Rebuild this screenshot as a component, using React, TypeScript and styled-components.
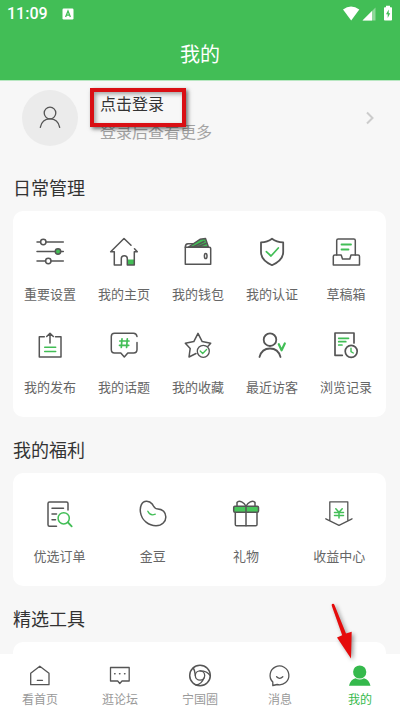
import React from "react";
import styled, { createGlobalStyle } from "styled-components";

const GREEN = "#42be56";
const INK = "#555555";

const GlobalStyle = createGlobalStyle`
  * { box-sizing: border-box; }
  body {
    margin: 0;
    background: #f7f7f7;
    font-family: "Noto Sans CJK SC", "Noto Sans", sans-serif;
  }
  button {
    border: 0;
    padding: 0;
    background: none;
    font: inherit;
    color: inherit;
    cursor: pointer;
  }
  h1, h2, p { margin: 0; font-weight: 400; }
`;

const Screen = styled.div`
  display: flex;
  flex-direction: column;
  height: 100vh;
  overflow: hidden;
`;

const Header = styled.header`
  flex: none;
  color: #ffffff;
  background: ${GREEN};
  border-bottom: 1px solid #b8e7c1;
`;

const StatusBar = styled.div`
  display: flex;
  align-items: center;
  height: 28px;
  padding: 0 8px 0 7px;
`;

const Clock = styled.time`
  font: 500 16px/28px Roboto, sans-serif;
  margin-right: 14px;
`;

const StatusIcons = styled.div`
  display: flex;
  align-items: center;
  margin-left: auto;
`;

const PageTitle = styled.h1`
  font-size: 20px;
  line-height: 52px;
  text-align: center;
`;

const Content = styled.main`
  flex: 1;
  min-height: 0;
  overflow: hidden;
`;

const Profile = styled.button`
  display: flex;
  align-items: flex-start;
  width: 100%;
  height: 94px;
  padding: 9px 24px 0 22px;
  text-align: left;
`;

const Avatar = styled.span`
  display: grid;
  place-items: center;
  width: 56px;
  height: 56px;
  border-radius: 50%;
  background: #ebebeb;
`;

const ProfileText = styled.span`
  position: relative;
  display: grid;
  flex: 1;
  row-gap: 2px;
  margin-left: 22px;
  font-size: 16px;
  line-height: 26px;
`;

const LoginText = styled.span`
  color: #333333;
`;

const HintText = styled.span`
  color: #a3a3a3;
`;

const Highlight = styled.span`
  position: absolute;
  top: -2px;
  left: -10px;
  width: 96px;
  height: 39px;
  border: 4px solid #d90f14;
  box-shadow: 2px 2px 4px rgba(0, 0, 0, 0.55), inset 2px 2px 4px rgba(0, 0, 0, 0.35);
`;

const Chevron = styled.span`
  display: flex;
  align-self: flex-start;
  padding-top: 20px;
`;

const Section = styled.section`
  margin: 0 14px 20px 13px;
`;

const SectionTitle = styled.h2`
  margin-bottom: 12px;
  font-size: 18px;
  line-height: 24px;
  color: #333333;
`;

const Card = styled.div<{ $columns: number }>`
  display: grid;
  grid-template-columns: repeat(${(p) => p.$columns}, 1fr);
  row-gap: 21px;
  min-height: 113px;
  padding: 25px ${(p) => (p.$columns === 5 ? 3 : 0)}px 16px 0;
  border-radius: 10px;
  background: #ffffff;
`;

const Entry = styled.button`
  display: flex;
  flex-direction: column;
  align-items: center;
  gap: 14px;
  height: 72px;
  font-size: 13px;
  line-height: 24px;
  color: #666666;
`;

const TabBar = styled.nav`
  position: relative;
  display: grid;
  flex: none;
  grid-template-columns: repeat(5, 1fr);
  height: 58px;
  padding-top: 10px;
  background: #ffffff;
`;

const Tab = styled.a<{ $active?: boolean }>`
  position: relative;
  display: flex;
  flex-direction: column;
  align-items: center;
  font-size: 12px;
  line-height: 22px;
  text-decoration: none;
  color: ${(p) => (p.$active ? "#35b94c" : "#999999")};
`;

const Pointer = styled.svg`
  position: absolute;
  right: 41px;
  bottom: 51px;
  filter: drop-shadow(2px 2px 2px rgba(0, 0, 0, 0.4));
`;

function Icon({ size = 32, children }: { size?: number; children: React.ReactNode }) {
  return (
    <svg
      width={size}
      height={size}
      viewBox={`0 0 ${size} ${size}`}
      fill="none"
      stroke={INK}
      strokeWidth={size === 32 ? 1.5 : 1.3}
      strokeLinejoin="round"
      strokeLinecap="round"
      aria-hidden="true"
    >
      {children}
    </svg>
  );
}

const daily = [
  {
    label: "重要设置",
    art: (
      <>
        <path d="M3 6H6.5M12 6H29.3M3 15.5H21.3M26.7 15.5H29.3M3 25H11.5M17 25H29.3" />
        <circle cx="9.3" cy="6" r="2.7" />
        <circle cx="24" cy="15.5" r="2.7" fill={GREEN} />
        <circle cx="14.3" cy="25" r="2.7" />
      </>
    ),
  },
  {
    label: "我的主页",
    art: (
      <>
        <path d="M19.3 23.5H26.3V29H19.3z" fill={GREEN} stroke="none" />
        <path d="M23 9.3 16 2.5 2.7 15.7H6.3V29H13.3V22.5Q13.3 19.7 16.3 19.7T19.3 22.5V29H26.3V15.7H29.3L26.5 12.8" />
      </>
    ),
  },
  {
    label: "我的钱包",
    art: (
      <>
        <path d="M6.5 11 18 3.3 23.5 2.5 26.3 10.8z" fill={GREEN} />
        <path d="M11 11 22 5.5M15 11 24 7.5M3.3 11.3Q3.3 7.8 6 7.8H11" />
        <path d="M3.3 11.3H27.5Q28.7 11.3 28.7 12.5V28.3H3.3z" fill="#fff" />
        <ellipse cx="23.7" cy="20" rx="1.3" ry="2.6" />
      </>
    ),
  },
  {
    label: "我的认证",
    art: (
      <>
        <path d="M16 2.7C13 5 9 6.2 5 6.4V16C5 22 10 26.5 16 29.2 22 26.5 27.2 22 27.2 16V6.4C23 6.2 19 5 16 2.7z" strokeWidth="1.8" />
        <path d="M10.3 15.7 15 20 22.3 12" stroke={GREEN} strokeWidth="1.7" />
      </>
    ),
  },
  {
    label: "草稿箱",
    art: (
      <>
        <path d="M6.7 19V4.5Q6.7 3 8.2 3H23.8Q25.3 3 25.3 4.5V19" />
        <path d="M4.8 19H11.2L12.5 23H19.8L21 19H28.2Q29.5 19 29.5 20.5V29H3.3V20.5Q3.3 19 4.8 19z" />
        <path d="M11.5 8.5H21M11.5 13.5H18.5" stroke={GREEN} strokeWidth="1.8" />
      </>
    ),
  },
  {
    label: "我的发布",
    art: (
      <>
        <path d="M10.3 7.7H5.3V28H27V7.7H21.5M16 14V4.3M12.7 7.5 16 4.2 19.3 7.5" />
        <path d="M10.7 18.3H21.7M10.7 22.5H21.7" stroke={GREEN} />
      </>
    ),
  },
  {
    label: "我的话题",
    art: (
      <>
        <path d="M29 7.5Q28.5 4.3 25.5 4.3H6.5Q3.3 4.3 3.3 7.5V20.5Q3.3 24 6.5 24H12.8L16.3 28 19.8 24H25.5Q29 24 29 20.5V13.5" />
        <path d="M14 9.8 13.3 18.5M19.3 9.8 18.6 18.5M11.8 12H21M11.5 16.3H20.7" stroke={GREEN} strokeWidth="1.7" />
      </>
    ),
  },
  {
    label: "我的收藏",
    art: (
      <>
        <path d="M14 24.5 7 28 8.2 19.4 3.3 14.3 11.8 12.6 16 4.3 20.2 12.6 28.7 14.2 26 17.2" />
        <circle cx="21.3" cy="22.3" r="6" strokeWidth="1.3" />
        <path d="M18.2 22 20.7 24.5 24.6 20.5" stroke={GREEN} strokeWidth="1.3" />
      </>
    ),
  },
  {
    label: "最近访客",
    art: (
      <>
        <circle cx="14" cy="10.7" r="6.3" strokeWidth="1.8" />
        <path d="M3.5 28C5 22.5 8.7 19.5 14 19.5S23 22.5 24.5 28" strokeWidth="1.8" />
        <path d="M22.8 15.2 25.6 21.3 28.8 14.5" stroke={GREEN} strokeWidth="2.2" />
      </>
    ),
  },
  {
    label: "浏览记录",
    art: (
      <>
        <path d="M12.3 26.3H5V4H24V14" strokeWidth="1.7" />
        <path d="M8.7 9.3H18.5M8.7 12.7H15.8M8.7 16H12" stroke={GREEN} strokeWidth="1.7" />
        <circle cx="21.2" cy="22.3" r="6" strokeWidth="1.7" />
        <path d="M21 19.3V22.7L23.3 24" stroke={GREEN} strokeWidth="1.4" />
      </>
    ),
  },
];

const benefits = [
  {
    label: "优选订单",
    art: (
      <>
        <path d="M12.5 28.3H5.5Q4 28.3 4 26.8V5.5Q4 4 5.5 4H22.5Q24 4 24 5.5V12M8 10.3H19.5M8 16H12.5M8 21.7H11.5" />
        <circle cx="19.7" cy="20.3" r="5.6" stroke={GREEN} />
        <path d="M24 24.5 27.7 28.3" stroke={GREEN} strokeWidth="1.8" />
      </>
    ),
  },
  {
    label: "金豆",
    art: (
      <>
        <path d="M9.5 3.2C4.5 3.3 2.6 9 3.5 14.5 4.7 22.5 12 27.8 19 27.8 25 27.8 29 23.5 28.8 18.8 28.5 13.8 25 11.3 21 11 17 10.8 17 8.6 15.2 6 13.8 4.2 12 3.1 9.5 3.2z" />
        <path d="M10.8 13.3C12.3 16.4 15.2 17.6 18.3 16.2" stroke={GREEN} strokeWidth="1.3" />
      </>
    ),
  },
  {
    label: "礼物",
    art: (
      <>
        <path d="M5.3 14.3V26.4Q5.3 27.7 6.6 27.7H25.7Q27 27.7 27 26.4V14.3" />
        <rect x="3.7" y="8.3" width="24.8" height="6" rx="1.2" fill="#48c75b" />
        <path d="M16 27.7V8.3C14.5 4.5 9 1.5 7 4.5V8.3M16 8.3C17.5 4.5 23 1.5 25 4.5V8.3" />
      </>
    ),
  },
  {
    label: "收益中心",
    art: (
      <>
        <path d="M6.8 22.5V3.8H24.8V22.5M2.8 20.8 16 27.3 29 20.8" strokeWidth="1.3" />
        <path d="M12.8 10.8 16 14.2 19.2 10.8M11.5 14.4H20.5M11.5 17.4H20.5M16 14.2V20" stroke={GREEN} />
      </>
    ),
  },
];

const tabs = [
  {
    label: "看首页",
    art: <path d="M11.8 2.2 21 9.3V20.7H2.7V9.3zM9.3 16.3H14.5" />,
  },
  {
    label: "逛论坛",
    art: (
      <>
        <path d="M2.5 3.5H21.2V17H14L11.8 19.5 9.7 17H2.5z" />
        <path d="M6.7 9.8H7M11.6 9.8H11.9M16.6 9.8H16.9" strokeWidth="1.6" />
      </>
    ),
  },
  {
    label: "宁国圈",
    art: (
      <>
        <circle cx="12" cy="11.5" r="10.3" strokeWidth="1.5" />
        <circle cx="12" cy="11.5" r="4.7" />
        <path d="M5.2 4C6.5 5.7 7 8 7.3 11.5M12 6.8C16 6.8 20 8 22 11.5M16 14C14.5 17.8 12 20.5 8 21" />
      </>
    ),
  },
  {
    label: "消息",
    art: (
      <>
        <path d="M4.8 21.5V18A9.4 9.4 0 1 1 9.2 20.5L4.8 21.5z" />
        <path d="M8.6 12.8Q11.7 16 14.8 12.8" />
      </>
    ),
  },
  {
    label: "我的",
    active: true,
    art: (
      <g fill="#35b94c" stroke="none">
        <circle cx="11.7" cy="8" r="6.6" />
        <path d="M1 21.7C2 17.5 4 15.2 7.5 14.2 10 15.8 13.5 15.8 16 14.2 19.5 15.2 21.5 17.5 22.5 21.7z" />
      </g>
    ),
  },
];

function EntryCard({ entries, columns }: { entries: typeof daily; columns: number }) {
  return (
    <Card $columns={columns}>
      {entries.map((entry) => (
        <Entry key={entry.label} type="button">
          <Icon>{entry.art}</Icon>
          {entry.label}
        </Entry>
      ))}
    </Card>
  );
}

export default function App() {
  return (
    <>
      <GlobalStyle />
      <Screen>
        <Header>
          <StatusBar>
            <Clock>11:09</Clock>
            <svg width="12" height="12" viewBox="0 0 12 12" aria-hidden="true">
              <rect x="0.5" y="0.5" width="11" height="11" rx="1.2" fill="#fff" />
              <path d="M3.6 9 6 3 8.4 9M4.5 7.2H7.5" fill="none" stroke={GREEN} strokeWidth="1.3" />
            </svg>
            <StatusIcons>
              <svg width="50" height="18" viewBox="0 0 50 18" aria-hidden="true">
                <path d="M1 4.5Q9 -1.5 17.3 4.5L9.2 15.5z" fill="#fff" />
                <path d="M33.5 2.5V15.5H20.5z" fill="#fff" opacity="0.4" />
                <path d="M30 6V15.5H20.5z" fill="#fff" />
                <path d="M44 0.8H48V2.2H49.3Q50 2.2 50 3V14.8Q50 15.6 49.2 15.6H42.8Q42 15.6 42 14.8V3Q42 2.2 42.8 2.2H44z" fill="#fff" />
                <path d="M46.7 4.5 44 9.3H45.7V13L48.2 8.2H46.7z" fill={GREEN} />
              </svg>
            </StatusIcons>
          </StatusBar>
          <PageTitle>我的</PageTitle>
        </Header>

        <Content>
          <Profile type="button">
            <Avatar>
              <Icon size={24}>
                <circle cx="12" cy="7" r="5.8" />
                <path d="M2.3 21.3C3.5 15.8 7 12.9 12 12.9S20.5 15.8 21.7 21.3" />
              </Icon>
            </Avatar>
            <ProfileText>
              <LoginText>点击登录</LoginText>
              <HintText>登录后查看更多</HintText>
              <Highlight />
            </ProfileText>
            <Chevron>
              <svg width="12" height="16" viewBox="0 0 12 16" fill="none" stroke="#cccccc" strokeWidth="2" aria-hidden="true">
                <path d="M3 2.5 8.5 8 3 13.5" />
              </svg>
            </Chevron>
          </Profile>

          <Section>
            <SectionTitle>日常管理</SectionTitle>
            <EntryCard entries={daily} columns={5} />
          </Section>
          <Section>
            <SectionTitle>我的福利</SectionTitle>
            <EntryCard entries={benefits} columns={4} />
          </Section>
          <Section>
            <SectionTitle>精选工具</SectionTitle>
            <Card $columns={4} />
          </Section>
        </Content>

        <TabBar>
          {tabs.map((tab) => (
            <Tab key={tab.label} href="#" $active={tab.active}>
              <Icon size={24}>{tab.art}</Icon>
              {tab.label}
              {tab.active && (
                <Pointer width="30" height="60" viewBox="0 0 30 60" aria-hidden="true">
                  <path d="M3 5.5Q2 3 4 2.8 5 2.7 5.5 4L17 32.5 22.7 30.7 22 57.5 8 36.5 13.2 34.3z" fill="#e50b0b" />
                </Pointer>
              )}
            </Tab>
          ))}
        </TabBar>
      </Screen>
    </>
  );
}
